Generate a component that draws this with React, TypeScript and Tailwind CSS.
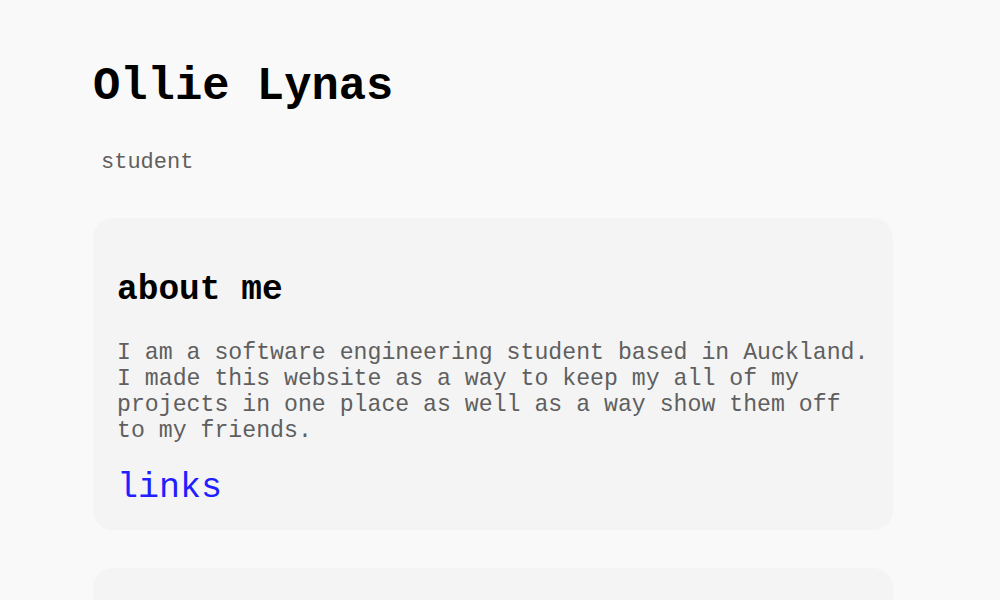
const mono =
  "font-['Courier_New','Courier','Nimbus_Mono_PS','FreeMono','Liberation_Mono',monospace]"

const Card = ({ children }: { children?: React.ReactNode }) => (
  <section className="rounded-[20px] bg-[#f4f4f4] pl-6 pr-4 pt-[55px] pb-6">
    {children}
  </section>
)

const App = () => {
  return (
    <div className={`min-h-screen bg-[#f9f9f9] ${mono}`}>
      <main className="ml-[93px] w-[800px] pt-[65px]">
        <h1 className="text-[45.5px] leading-none font-bold text-black">
          Ollie Lynas
        </h1>
        <p className="mt-[39px] pl-2 text-[22px] leading-[26px] text-[#5f5f5f]">
          student
        </p>

        <div className="mt-[42px] flex flex-col gap-[38px]">
          <Card>
            <h2 className="text-[34.5px] leading-none font-bold text-black">
              about me
            </h2>
            <p className="mt-[33px] text-[23.2px] leading-[26px] text-[#5f5f5f]">
              I am a software engineering student based in Auckland. I made
              this website as a way to keep my all of my projects in one place
              as well as a way show them off to my friends.
            </p>
            <a
              href="#"
              className="mt-[27px] block text-[35px] leading-none text-[#1f1fff]"
            >
              links
            </a>
          </Card>
          <section className="h-[300px] rounded-[20px] bg-[#f4f4f4]" />
        </div>
      </main>
    </div>
  )
}

export default App
